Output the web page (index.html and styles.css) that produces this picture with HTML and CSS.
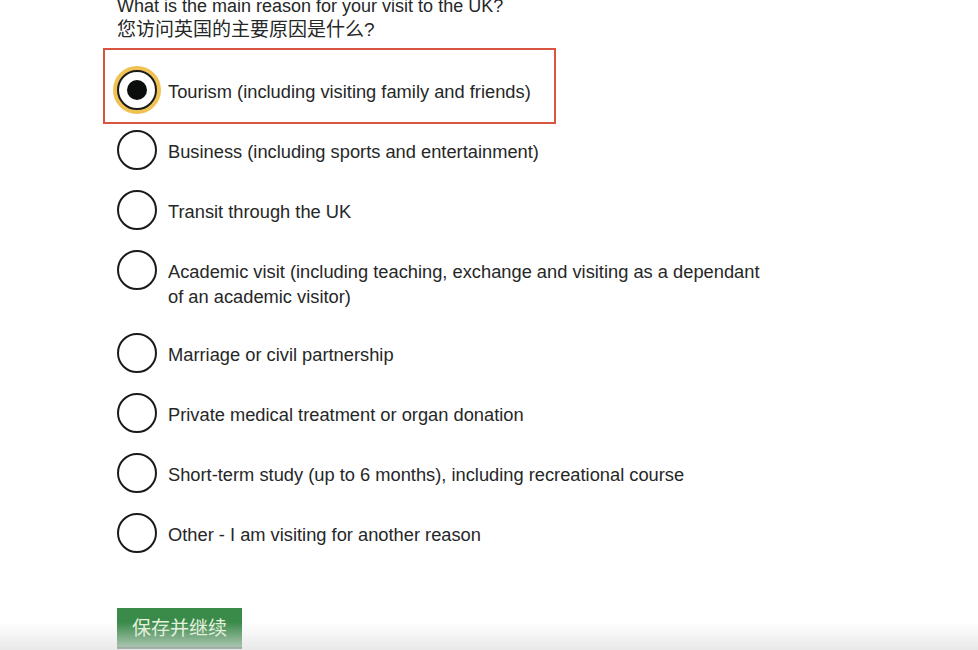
FILE: index.html
```html
<!DOCTYPE html>
<html lang="zh">
<head>
<meta charset="utf-8">
<title>Visit reason</title>
<link rel="stylesheet" href="styles.css">
</head>
<body>
<main class="page">
  <fieldset class="fieldset">
    <legend class="legend">What is the main reason for your visit to the UK?<br><span class="legend-cn">您访问英国的主要原因是什么?</span></legend>
    <div class="radios">
      <div class="item item-selected">
        <span class="radio radio-checked"></span>
        <span class="label">Tourism (including visiting family and friends)</span>
        <span class="highlight"></span>
      </div>
      <div class="item">
        <span class="radio"></span>
        <span class="label">Business (including sports and entertainment)</span>
      </div>
      <div class="item">
        <span class="radio"></span>
        <span class="label">Transit through the UK</span>
      </div>
      <div class="item">
        <span class="radio"></span>
        <span class="label">Academic visit (including teaching, exchange and visiting as a dependant<br>of an academic visitor)</span>
      </div>
      <div class="item">
        <span class="radio"></span>
        <span class="label">Marriage or civil partnership</span>
      </div>
      <div class="item">
        <span class="radio"></span>
        <span class="label">Private medical treatment or organ donation</span>
      </div>
      <div class="item">
        <span class="radio"></span>
        <span class="label">Short-term study (up to 6 months), including recreational course</span>
      </div>
      <div class="item">
        <span class="radio"></span>
        <span class="label">Other - I am visiting for another reason</span>
      </div>
    </div>
  </fieldset>
  <button class="button" type="button">保存并继续</button>
</main>
<div class="fade"></div>
</body>
</html>
```
FILE: styles.css
```css
html, body {
  margin: 0;
  padding: 0;
  background: #ffffff;
}

body {
  font-family: "Liberation Sans", "Noto Sans CJK SC", sans-serif;
  color: #262727;
  overflow: hidden;
  height: 650px;
}

.page {
  padding-left: 117px;
  margin-top: -6px;
}

.fieldset {
  border: 0;
  margin: 0;
  padding: 0;
}

.legend {
  padding: 0;
  font-size: 18px;
  line-height: 24px;
  margin-bottom: 28px;
  color: #262727;
}

.legend-cn {
  font-size: 19px;
}

.radios {
  display: flex;
  flex-direction: column;
  gap: 20px;
}

.item {
  position: relative;
  display: flex;
  align-items: flex-start;
  gap: 11px;
}

.radio {
  flex: none;
  box-sizing: border-box;
  width: 40px;
  height: 40px;
  border: 2.5px solid #1a1b1b;
  border-radius: 50%;
  background: #fff;
  position: relative;
}

.radio-checked {
  box-shadow: 0 0 0 4px #f0c254;
}

.radio-checked::after {
  content: "";
  position: absolute;
  left: 50%;
  top: 50%;
  width: 20px;
  height: 20px;
  margin: -10px 0 0 -10px;
  border-radius: 50%;
  background: #0b0c0c;
}

.label {
  font-size: 18.3px;
  line-height: 25px;
  padding-top: 9px;
  padding-bottom: 4px;
  color: #262727;
}

.highlight {
  position: absolute;
  left: -14px;
  top: -22px;
  width: 449px;
  height: 72px;
  border: 2px solid #d9553f;
  pointer-events: none;
}

.button {
  margin-top: 55px;
  font-family: "Noto Sans CJK SC", sans-serif;
  font-size: 19px;
  line-height: 24px;
  padding: 7px 15px 8px;
  border: 0;
  border-radius: 0;
  background: #3a8a4a;
  color: #e4f3dc;
  box-shadow: 0 2px 0 #143b22;
}

.fade {
  position: fixed;
  left: 0;
  right: 0;
  bottom: 0;
  height: 28px;
  background: linear-gradient(to bottom, rgba(235, 235, 235, 0), rgba(225, 225, 225, 0.75));
  pointer-events: none;
}
```
